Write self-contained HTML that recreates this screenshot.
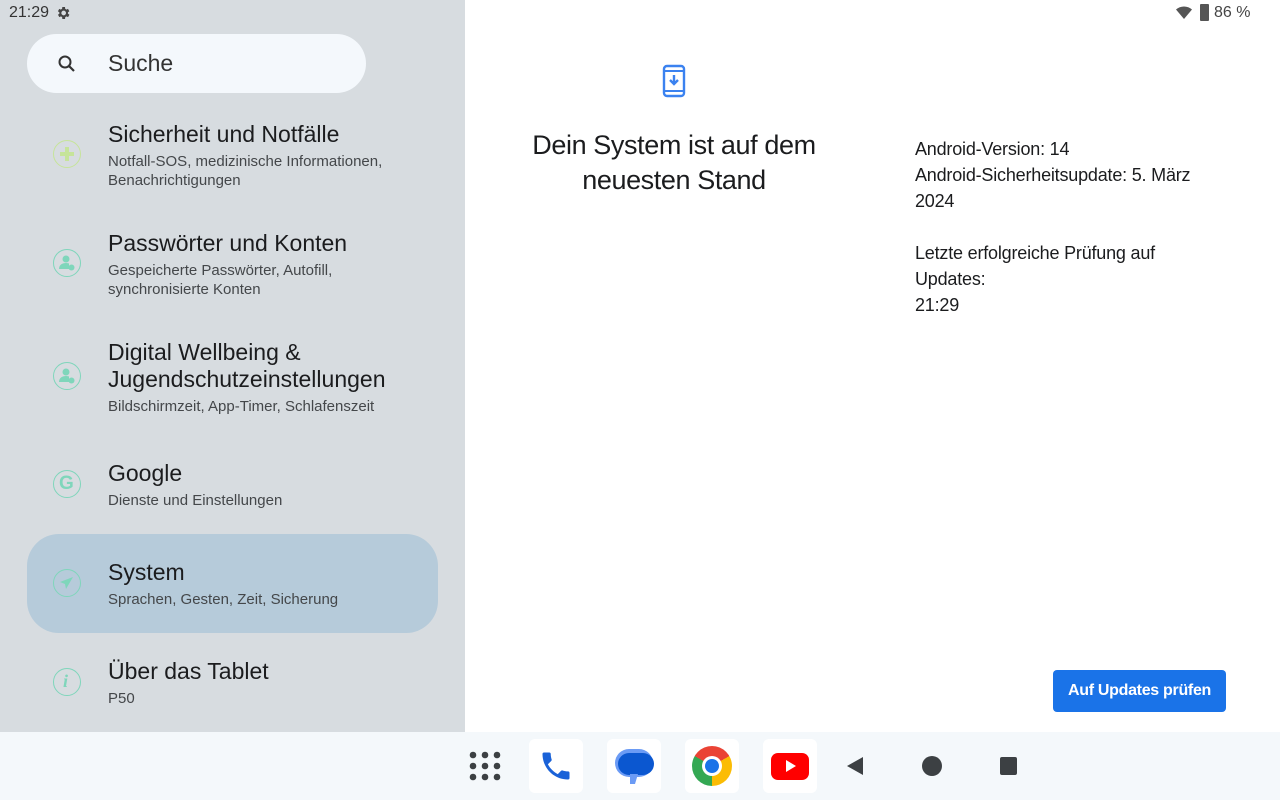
<!DOCTYPE html>
<html><head><meta charset="utf-8"><style>
*{margin:0;padding:0;box-sizing:border-box}
body{width:1280px;height:800px;overflow:hidden;background:#fff;font-family:"Liberation Sans",sans-serif;position:relative;color:#1b1c1e}
.left{position:absolute;left:0;top:0;width:465px;height:732px;background:#d7dce0}
.abs{position:absolute}
.search{left:27px;top:34px;width:339px;height:59px;border-radius:30px;background:#f4f8fc}
.t{font-size:23px;color:#1b1c1e;white-space:nowrap}
.s{font-size:15px;color:#44474a;line-height:19px}
.ic{position:absolute;left:53px;width:28px;height:28px;border-radius:50%;border:1.5px solid #7fd6bb}
.sel{left:27px;top:534px;width:411px;height:99px;border-radius:32px;background:#b6cbda}
.nav{left:0;top:732px;width:1280px;height:68px;background:#f4f8fb}
.app{position:absolute;top:739px;width:54px;height:54px;border-radius:6px;background:#fff}
.r{font-size:18px;color:#1b1c1e;line-height:26px;letter-spacing:-0.2px}
</style></head><body>
<div class="left"></div>
<div class="abs" style="left:9px;top:4px;font-size:16px;color:#333">21:29</div>
<svg class="abs" style="left:55px;top:5px" width="16" height="16" viewBox="0 0 24 24"><path fill="#444" d="M19.4 13a7.5 7.5 0 0 0 0-2l2.1-1.6-2-3.5-2.5 1a7 7 0 0 0-1.7-1L15 3h-4l-.4 2.9a7 7 0 0 0-1.7 1l-2.5-1-2 3.5L6.6 11a7.5 7.5 0 0 0 0 2l-2.1 1.6 2 3.5 2.5-1a7 7 0 0 0 1.7 1L11 21h4l.4-2.9a7 7 0 0 0 1.7-1l2.5 1 2-3.5zM13 15.5a3.5 3.5 0 1 1 0-7 3.5 3.5 0 0 1 0 7z"/></svg>
<div class="abs search"></div>
<svg class="abs" style="left:55px;top:52px" width="24" height="24" viewBox="0 0 24 24"><circle cx="10" cy="10" r="5.5" fill="none" stroke="#333" stroke-width="2"/><path d="M14 14l5 5" stroke="#333" stroke-width="2.2"/></svg>
<div class="abs" style="left:108px;top:50px;font-size:23px;color:#333">Suche</div>

<div class="ic" style="top:140px;border-color:#c6e49a"></div>
<div class="abs" style="left:60px;top:152px;width:14px;height:4px;background:#c6e49a"></div>
<div class="abs" style="left:65px;top:147px;width:4px;height:14px;background:#c6e49a"></div>
<div class="abs t" style="left:108px;top:121px">Sicherheit und Notfälle</div>
<div class="abs s" style="left:108px;top:152px">Notfall-SOS, medizinische Informationen,<br>Benachrichtigungen</div>

<div class="ic" style="top:249px"></div>
<svg class="abs" style="left:57px;top:253px" width="20" height="20" viewBox="0 0 20 20"><circle cx="9" cy="6" r="3.5" fill="#7fd6bb"/><path d="M2 16c0-4 3-6 7-6 2 0 3 .5 3 .5V16z" fill="#7fd6bb"/><circle cx="14.5" cy="14.5" r="3" fill="#7fd6bb"/></svg>
<div class="abs t" style="left:108px;top:230px">Passwörter und Konten</div>
<div class="abs s" style="left:108px;top:261px">Gespeicherte Passwörter, Autofill,<br>synchronisierte Konten</div>

<div class="ic" style="top:362px"></div>
<svg class="abs" style="left:57px;top:366px" width="20" height="20" viewBox="0 0 20 20"><circle cx="9" cy="6" r="3.5" fill="#7fd6bb"/><path d="M2 16c0-4 3-6 7-6 2 0 3 .5 3 .5V16z" fill="#7fd6bb"/><circle cx="14.5" cy="14.5" r="3" fill="#7fd6bb"/></svg>
<div class="abs t" style="left:108px;top:339px;line-height:27px">Digital Wellbeing &amp;<br>Jugendschutzeinstellungen</div>
<div class="abs s" style="left:108px;top:397px">Bildschirmzeit, App-Timer, Schlafenszeit</div>

<div class="ic" style="top:470px"></div>
<div class="abs" style="left:59px;top:473px;font-size:19px;font-weight:bold;color:#7fd6bb">G</div>
<div class="abs t" style="left:108px;top:460px">Google</div>
<div class="abs s" style="left:108px;top:491px">Dienste und Einstellungen</div>

<div class="abs sel"></div>
<div class="ic" style="top:569px"></div>
<svg class="abs" style="left:58px;top:574px" width="18" height="18" viewBox="0 0 18 18"><path d="M15 3L2 8l5 2 1 5z" fill="#7fd6bb"/></svg>
<div class="abs t" style="left:108px;top:559px">System</div>
<div class="abs s" style="left:108px;top:590px">Sprachen, Gesten, Zeit, Sicherung</div>

<div class="ic" style="top:668px"></div>
<div class="abs" style="left:63px;top:671px;font-size:18px;font-style:italic;font-family:'Liberation Serif',serif;color:#7fd6bb;font-weight:bold">i</div>
<div class="abs t" style="left:108px;top:658px">Über das Tablet</div>
<div class="abs s" style="left:108px;top:689px">P50</div>

<svg class="abs" style="left:1175px;top:5px" width="18" height="16" viewBox="0 0 18 16"><path d="M1 4.5a12 12 0 0 1 16 0L9 14z" fill="#555"/></svg>
<div class="abs" style="left:1200px;top:4px;width:9px;height:17px;background:#555;border-radius:1px"></div>
<div class="abs" style="left:1214px;top:4px;font-size:16px;color:#444">86 %</div>

<svg class="abs" style="left:662px;top:64px" width="24" height="34" viewBox="0 0 24 34"><rect x="2" y="2" width="20" height="30" rx="3" fill="none" stroke="#3b82f0" stroke-width="2.4"/><path d="M2 7h20M2 27h20" stroke="#3b82f0" stroke-width="2"/><path d="M12 11v9M8 16l4 4 4-4" stroke="#3b82f0" stroke-width="2.4" fill="none"/></svg>
<div class="abs" style="left:500px;top:128px;width:348px;text-align:center;font-size:27px;line-height:35px;color:#1b1c1e;letter-spacing:-0.4px">Dein System ist auf dem<br>neuesten Stand</div>
<div class="abs r" style="left:915px;top:136px">Android-Version: 14<br>Android-Sicherheitsupdate: 5. März<br>2024<br><br>Letzte erfolgreiche Prüfung auf<br>Updates:<br>21:29</div>
<div class="abs" style="left:1053px;top:670px;width:173px;height:42px;background:#1a73e8;border-radius:4px;color:#fff;font-size:16px;font-weight:bold;text-align:center;line-height:42px;letter-spacing:-0.3px">Auf Updates prüfen</div>

<div class="abs nav"></div>
<svg class="abs" style="left:468px;top:750px" width="34" height="32" viewBox="0 0 34 32"><g fill="#3c4043"><circle cx="5" cy="5" r="3.3"/><circle cx="17" cy="5" r="3.3"/><circle cx="29" cy="5" r="3.3"/><circle cx="5" cy="16" r="3.3"/><circle cx="17" cy="16" r="3.3"/><circle cx="29" cy="16" r="3.3"/><circle cx="5" cy="27" r="3.3"/><circle cx="17" cy="27" r="3.3"/><circle cx="29" cy="27" r="3.3"/></g></svg>
<div class="app" style="left:529px"></div>
<svg class="abs" style="left:538px;top:748px" width="36" height="36" viewBox="0 0 24 24"><path fill="#1a62d8" d="M6.6 10.8c1.4 2.8 3.8 5.1 6.6 6.6l2.2-2.2c.3-.3.7-.4 1-.2 1.1.4 2.3.6 3.6.6.6 0 1 .4 1 1V20c0 .6-.4 1-1 1C10.6 21 3 13.4 3 4c0-.6.4-1 1-1h3.5c.6 0 1 .4 1 1 0 1.3.2 2.5.6 3.6.1.3 0 .7-.2 1z"/></svg>
<div class="app" style="left:607px"></div>
<div class="abs" style="left:615px;top:749px;width:38px;height:28px;border-radius:14px;background:#6b9bf5"></div>
<div class="abs" style="left:618px;top:753px;width:36px;height:22px;border-radius:11px;background:#0b57d0"></div>
<div class="abs" style="left:630px;top:774px;width:0;height:0;border-left:5px solid #6b9bf5;border-top:10px solid #6b9bf5;border-right:3px solid transparent"></div>
<div class="app" style="left:685px"></div>
<div class="abs" style="left:692px;top:746px;width:40px;height:40px;border-radius:50%;background:conic-gradient(from -60deg,#ea4335 0 120deg,#fbbc04 120deg 240deg,#34a853 240deg 360deg)"></div>
<div class="abs" style="left:702px;top:756px;width:20px;height:20px;border-radius:50%;background:#fff"></div>
<div class="abs" style="left:705px;top:759px;width:14px;height:14px;border-radius:50%;background:#1a73e8"></div>
<div class="app" style="left:763px"></div>
<div class="abs" style="left:771px;top:753px;width:38px;height:27px;border-radius:7px;background:#f00"></div>
<div class="abs" style="left:786px;top:760px;width:0;height:0;border-left:10px solid #fff;border-top:6px solid transparent;border-bottom:6px solid transparent"></div>
<div class="abs" style="left:847px;top:757px;width:0;height:0;border-right:16px solid #3c4043;border-top:9px solid transparent;border-bottom:9px solid transparent"></div>
<div class="abs" style="left:922px;top:756px;width:20px;height:20px;border-radius:50%;background:#3c4043"></div>
<div class="abs" style="left:1000px;top:757px;width:17px;height:18px;border-radius:2px;background:#3c4043"></div>
</body></html>
